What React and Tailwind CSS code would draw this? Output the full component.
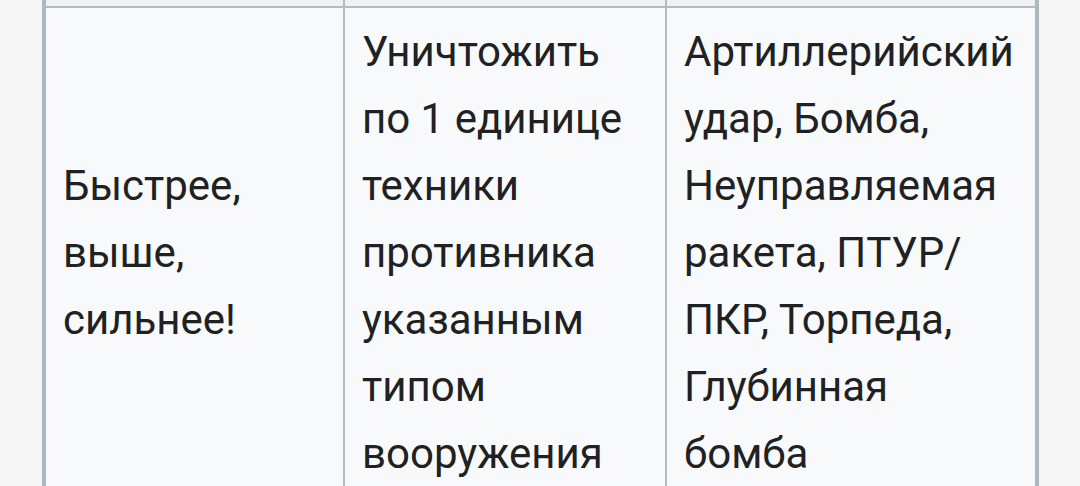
const rows = [
  {
    goal: ["Быстрее,", "выше,", "сильнее!"],
    task: ["Уничтожить", "по 1 единице", "техники", "противника", "указанным", "типом", "вооружения"],
    weapons: ["Артиллерийский", "удар, Бомба,", "Неуправляемая", "ракета, ПТУР/", "ПКР, Торпеда,", "Глубинная", "бомба"],
  },
];

const Lines = ({ lines }) => (
  <>
    {lines.map((line, i) => (
      <span key={i} className="block whitespace-nowrap">
        {line}
      </span>
    ))}
  </>
);

export default function App() {
  return (
    <div
      className="h-screen overflow-hidden bg-[#f6f6f6] pl-[42px] text-[#202122]"
      style={{ fontFamily: "Roboto, 'Noto Sans', sans-serif" }}
    >
      <div className="w-[997px] border-x-4 border-[#adb9bf] bg-[#f8f9fa]">
        {/* header row, only its lower edge is visible */}
        <div className="flex h-[8px] border-b-2 border-[#b2bcc2] bg-[#eef0f2]">
          <div className="w-[299px] border-r-2 border-[#b2bcc2]"></div>
          <div className="w-[322px] border-r-2 border-[#b2bcc2]"></div>
          <div className="w-[368px]"></div>
        </div>
        {rows.map((row, i) => (
          <div key={i} className="flex text-[42px] leading-[67px]">
            <div className="flex w-[299px] items-center border-r-2 border-[#b2bcc2] px-[17px] py-[10px]">
              <div>
                <Lines lines={row.goal} />
              </div>
            </div>
            <div className="w-[322px] border-r-2 border-[#b2bcc2] px-[17px] py-[10px]">
              <Lines lines={row.task} />
            </div>
            <div className="w-[368px] px-[17px] py-[10px]">
              <Lines lines={row.weapons} />
            </div>
          </div>
        ))}
      </div>
    </div>
  );
}
